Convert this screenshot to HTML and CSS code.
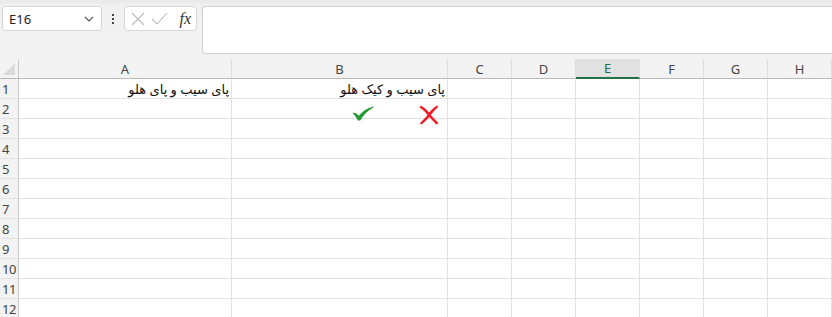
FILE: index.html
```html
<!DOCTYPE html>
<html lang="fa">
  <head>
    <meta charset="UTF-8" />
    <title>Sheet1</title>
    <link rel="stylesheet" href="styles.css">
  </head>
  <body>
    <!-- formula bar -->
    <div class="toolbar">
      <div class="namebox">
        <span>E16</span>
        <svg class="chev" width="10" height="6" viewBox="0 0 10 6"><path d="M1 1 L5 5 L9 1" fill="none" stroke="#555" stroke-width="1.1"/></svg>
      </div>
      <div class="dots"><i></i><i></i><i></i></div>
      <div class="fx-buttons">
        <svg width="14" height="14" viewBox="0 0 14 14"><path d="M1 1 L13 13 M13 1 L1 13" stroke="#bbb" stroke-width="1.1"/></svg>
        <svg width="17" height="13" viewBox="0 0 17 13"><path d="M1 7 L6 12 L16 1" fill="none" stroke="#bbb" stroke-width="1.1"/></svg>
        <span class="fx">fx</span>
      </div>
      <div class="formula"></div>
    </div>

    <!-- sheet -->
    <div class="sheet">
      <div class="grid">
        <div class="corner"><span class="tri"></span></div>
        <div class="colhead">A</div>
        <div class="colhead">B</div>
        <div class="colhead">C</div>
        <div class="colhead">D</div>
        <div class="colhead active">E</div>
        <div class="colhead">F</div>
        <div class="colhead">G</div>
        <div class="colhead">H</div>

        <div class="rowhead">1</div>
        <div class="cell"><span dir="rtl">پای سیب و پای هلو</span></div>
        <div class="cell"><span dir="rtl">پای سیب و کیک هلو</span></div>
        <div class="cell"></div><div class="cell"></div><div class="cell"></div><div class="cell"></div><div class="cell"></div><div class="cell"></div>

        <div class="rowhead">2</div>
        <div class="cell"></div><div class="cell"></div><div class="cell"></div><div class="cell"></div><div class="cell"></div><div class="cell"></div><div class="cell"></div><div class="cell"></div>
        <div class="rowhead">3</div>
        <div class="cell"></div><div class="cell"></div><div class="cell"></div><div class="cell"></div><div class="cell"></div><div class="cell"></div><div class="cell"></div><div class="cell"></div>
        <div class="rowhead">4</div>
        <div class="cell"></div><div class="cell"></div><div class="cell"></div><div class="cell"></div><div class="cell"></div><div class="cell"></div><div class="cell"></div><div class="cell"></div>
        <div class="rowhead">5</div>
        <div class="cell"></div><div class="cell"></div><div class="cell"></div><div class="cell"></div><div class="cell"></div><div class="cell"></div><div class="cell"></div><div class="cell"></div>
        <div class="rowhead">6</div>
        <div class="cell"></div><div class="cell"></div><div class="cell"></div><div class="cell"></div><div class="cell"></div><div class="cell"></div><div class="cell"></div><div class="cell"></div>
        <div class="rowhead">7</div>
        <div class="cell"></div><div class="cell"></div><div class="cell"></div><div class="cell"></div><div class="cell"></div><div class="cell"></div><div class="cell"></div><div class="cell"></div>
        <div class="rowhead">8</div>
        <div class="cell"></div><div class="cell"></div><div class="cell"></div><div class="cell"></div><div class="cell"></div><div class="cell"></div><div class="cell"></div><div class="cell"></div>
        <div class="rowhead">9</div>
        <div class="cell"></div><div class="cell"></div><div class="cell"></div><div class="cell"></div><div class="cell"></div><div class="cell"></div><div class="cell"></div><div class="cell"></div>
        <div class="rowhead">10</div>
        <div class="cell"></div><div class="cell"></div><div class="cell"></div><div class="cell"></div><div class="cell"></div><div class="cell"></div><div class="cell"></div><div class="cell"></div>
        <div class="rowhead">11</div>
        <div class="cell"></div><div class="cell"></div><div class="cell"></div><div class="cell"></div><div class="cell"></div><div class="cell"></div><div class="cell"></div><div class="cell"></div>
        <div class="rowhead">12</div>
        <div class="cell"></div><div class="cell"></div><div class="cell"></div><div class="cell"></div><div class="cell"></div><div class="cell"></div><div class="cell"></div><div class="cell"></div>
      </div>

      <!-- floating shapes -->
      <svg class="shape check" width="22" height="15" viewBox="0 0 22 15">
        <path d="M0.5 7 C2.5 6.2 4.5 7.5 6.8 9.8 C10.5 5.5 15 2 21.5 0.5 L21.7 1.3 C15.5 4.5 11.5 9 8.2 14.5 L6 14.5 C4.5 11.8 2.8 9 0.5 7 Z" fill="#1f9a2e"/>
      </svg>
      <svg class="shape cross" width="20" height="20" viewBox="0 0 20 20">
        <path d="M1.5 0.8 C4.5 1.5 7.5 4.5 10 7.6 C12.5 4.8 15.5 2 18.2 0.5 L19.3 1.8 C16.5 4.2 14 7 11.8 10 C14.2 12.8 16.8 15.5 19.5 18 L17.3 19.6 C15 17.2 12.5 14.6 10.3 12 C7.8 14.8 5.2 17.3 2.6 19.5 L0.8 18.2 C3.5 15.8 6 13 8.6 10 C6.2 7 3.5 4.2 0.5 2.6 Z" fill="#ee1c24"/>
      </svg>
    </div>
  </body>
</html>
```
FILE: styles.css
```css
body {
  margin: 0;
  padding: 0;
  width: 832px;
  height: 317px;
  overflow: hidden;
  background: #f3f3f3;
  font-family: "Noto Sans", "DejaVu Sans", sans-serif;
  color: #222;
}

/* formula bar */
.toolbar {
  height: 59px;
  box-sizing: border-box;
  padding: 6px 0 0 2px;
  display: flex;
  align-items: flex-start;
  background: linear-gradient(#e9e9e9 0, #f0f0f0 6px, #f3f3f3 100%);
}

.namebox {
  width: 100px;
  height: 25px;
  box-sizing: border-box;
  background: #fff;
  border: 1px solid #d6d6d6;
  border-radius: 4px;
  display: flex;
  align-items: center;
  justify-content: space-between;
  padding: 0 7px 0 6px;
  font-size: 13px;
  color: #222;
}

.dots {
  width: 22px;
  height: 25px;
  display: flex;
  flex-direction: column;
  align-items: center;
  justify-content: center;
  gap: 2px;
}

.dots i {
  width: 2px;
  height: 2px;
  background: #444;
}

.fx-buttons {
  width: 73px;
  height: 25px;
  box-sizing: border-box;
  background: #fff;
  border: 1px solid #d6d6d6;
  border-radius: 4px;
  display: flex;
  align-items: center;
  padding: 0 5px 0 6px;
  gap: 6px;
}

.fx {
  margin-left: auto;
  font-family: "Liberation Serif", serif;
  font-style: italic;
  font-size: 16px;
  color: #333;
  line-height: 1;
}

.formula {
  margin-left: 5px;
  flex: 1;
  height: 46px;
  background: #fff;
  border: 1px solid #d0d0d0;
  border-right: none;
  border-radius: 4px 0 0 4px;
}

/* sheet */
.sheet {
  position: relative;
  background: #fff;
  height: 258px;
}

.grid {
  display: grid;
  grid-template-columns: 19px 213px 216px 64px 64px 64px 64px 64px 64px;
  grid-auto-rows: 20px;
  background: #fff;
}

.colhead,
.corner,
.rowhead {
  background: #f3f3f3;
  box-sizing: border-box;
  font-size: 13px;
  color: #444;
}

.corner {
  border-right: 1px solid #c8c8c8;
  border-bottom: 1px solid #b9b9b9;
  position: relative;
}

.tri {
  position: absolute;
  right: 3px;
  bottom: 3px;
  width: 0;
  height: 0;
  border-left: 12px solid transparent;
  border-bottom: 12px solid #dadada;
}

.colhead {
  border-right: 1px solid #dedede;
  border-bottom: 1px solid #b9b9b9;
  display: flex;
  align-items: center;
  justify-content: center;
}

.colhead.active {
  background: #e1e1e1;
  color: #1e6e42;
  border-bottom: 2px solid #217346;
}

.rowhead {
  border-right: 1px solid #c8c8c8;
  border-bottom: 1px solid #e1e1e1;
  padding-left: 2px;
  display: flex;
  align-items: center;
  letter-spacing: -0.5px;
}

.cell {
  box-sizing: border-box;
  border-right: 1px solid #e1e1e1;
  border-bottom: 1px solid #e1e1e1;
  font-size: 13px;
  color: #111;
  display: flex;
  align-items: center;
  justify-content: flex-end;
  padding-right: 2px;
}

.shape {
  position: absolute;
}

.check {
  left: 352px;
  top: 47px;
}

.cross {
  left: 419px;
  top: 46px;
}
```
